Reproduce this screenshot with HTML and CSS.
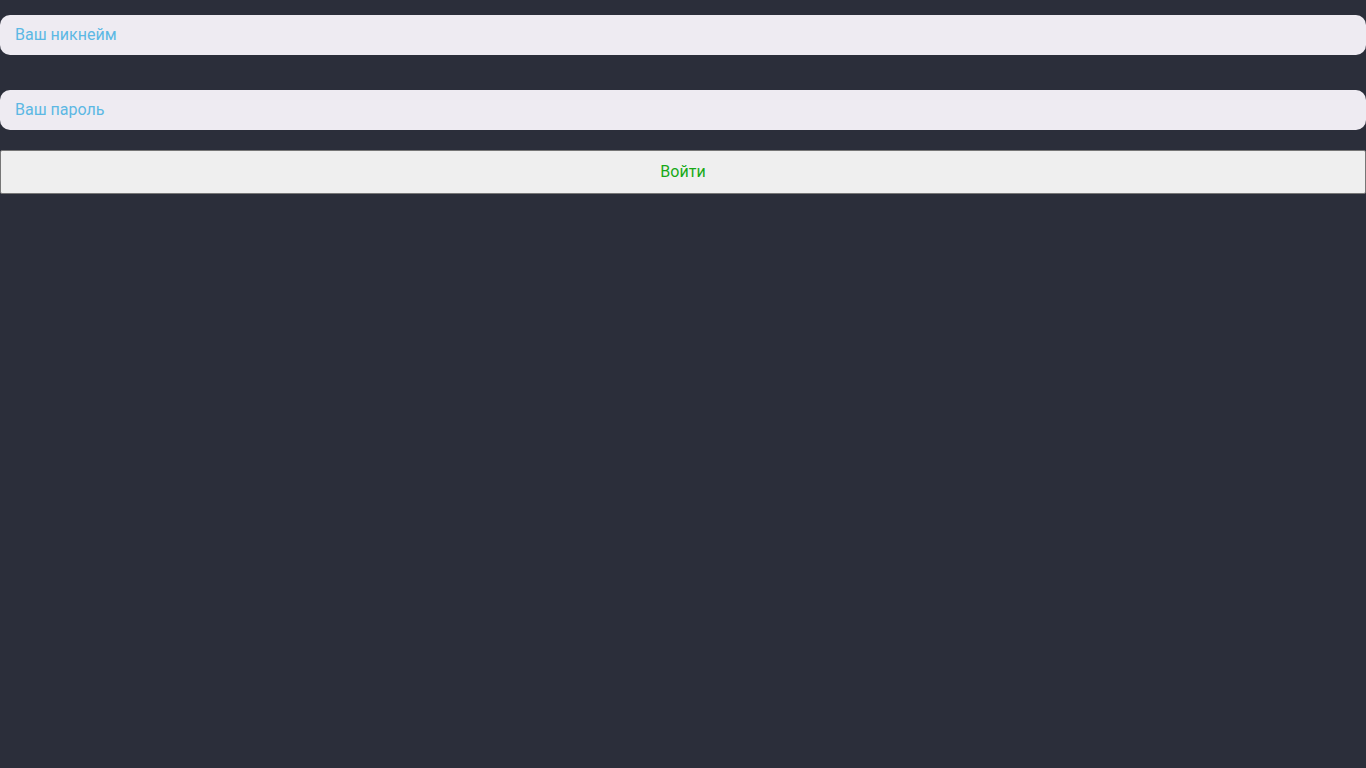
FILE: index.html
```html
<!DOCTYPE html>
<html lang="ru">
<head>
<meta charset="utf-8">
<link rel="stylesheet" href="styles.css">
</head>
<body>
<form class="login">
  <input class="field field-nick" type="text" placeholder="Ваш никнейм">
  <input class="field field-pass" type="password" placeholder="Ваш пароль">
  <button class="submit" type="button">Войти</button>
</form>
</body>
</html>
```
FILE: styles.css
```css
html, body {
  margin: 0;
  padding: 0;
  background: #2b2e3a;
  height: 100%;
}
body {
  font-family: Roboto, "Liberation Sans", sans-serif;
}
.login {
  display: flex;
  flex-direction: column;
  padding-top: 15px;
}
.field {
  box-sizing: border-box;
  width: 100%;
  height: 40px;
  border: none;
  border-radius: 10px;
  background: #eeebf2;
  padding: 0 15px 2px;
  font-family: Roboto, "Liberation Sans", sans-serif;
  font-size: 16px;
  color: #333;
  outline: none;
  margin: 0;
}
.field::placeholder {
  color: #5cb8e4;
  opacity: 1;
}
.field-pass {
  margin-top: 35px;
}
.submit {
  box-sizing: border-box;
  margin-top: 20px;
  width: 100%;
  height: 44px;
  background: #efefef;
  border: 1px solid #767676;
  border-radius: 2px;
  color: #17a917;
  font-family: Roboto, "Liberation Sans", sans-serif;
  font-size: 16px;
  padding: 0 0 2px;
}
```
